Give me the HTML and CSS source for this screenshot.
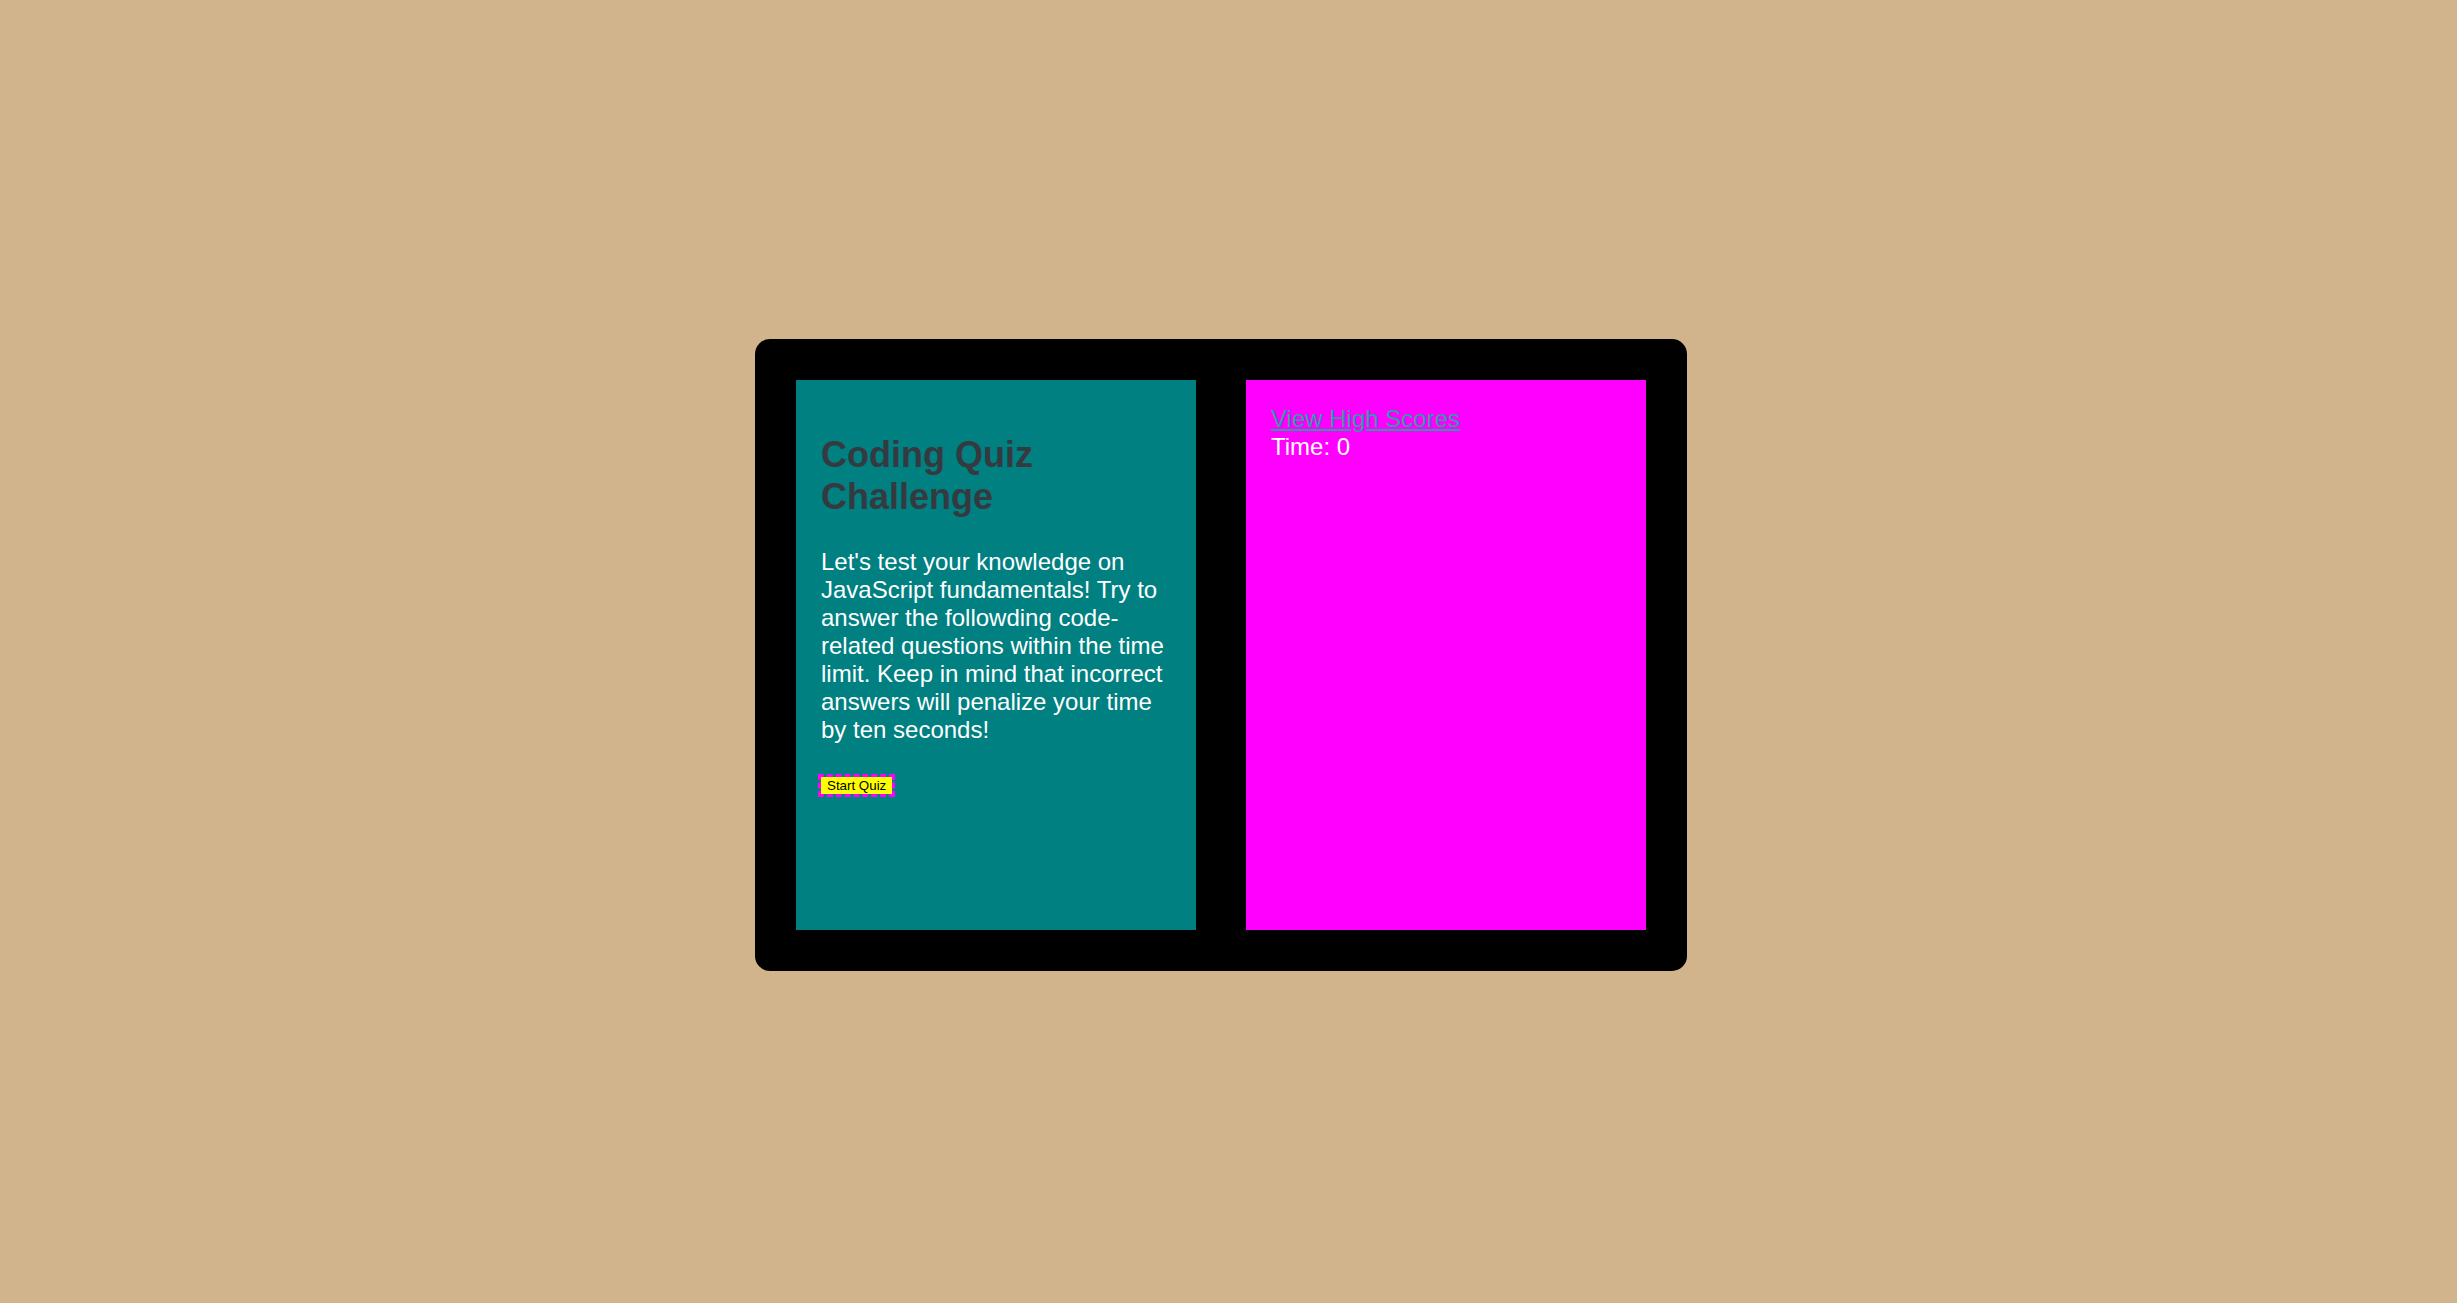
FILE: index.html
```html
<!DOCTYPE html>
<html lang="en">
<head>
<meta charset="utf-8">
<title>Coding Quiz Challenge</title>
<link rel="stylesheet" href="styles.css">
</head>
<body>
<div class="page">
  <main class="frame">
    <section class="panel intro">
      <h1 class="title">Coding Quiz Challenge</h1>
      <p class="lead">Let's test your knowledge on JavaScript fundamentals! Try to answer the followding code-related questions within the time limit. Keep in mind that incorrect answers will penalize your time by ten seconds!</p>
      <button class="start" type="button">Start Quiz</button>
    </section>
    <section class="panel side">
      <a class="scores" href="#">View High Scores</a>
      <div class="timer">Time: 0</div>
    </section>
  </main>
</div>
</body>
</html>
```
FILE: styles.css
```css
html, body {
  margin: 0;
  padding: 0;
}
body {
  background: #d2b48c;
  font-family: "Liberation Sans", Arial, sans-serif;
}
.page {
  min-height: 1303px;
  box-sizing: border-box;
  padding: 7px 15px 0 0;
  display: flex;
  align-items: center;
  justify-content: center;
}
.frame {
  display: flex;
  gap: 50px;
  padding: 41px;
  background: #000;
  border-radius: 15px;
}
.panel {
  width: 400px;
  height: 550px;
  box-sizing: border-box;
  padding: 25px;
}
.intro {
  background: #008080;
  color: #fff;
}
.side {
  background: #ff00ff;
  color: #fff;
  font-size: 24px;
}
.title {
  margin: 29px 0 0;
  font-size: 36px;
  font-weight: bold;
  color: #343a40;
}
.lead {
  margin: 30px 0 0;
  font-size: 24px;
}
.start {
  display: block;
  margin: 33px 0 0;
  padding: 1px 6px;
  border: none;
  background: #ffff00;
  color: #000;
  font-family: "Liberation Sans", Arial, sans-serif;
  font-size: 13.333px;
  outline: 3px dashed #ff00ff;
}
.scores {
  color: #2b9ba8;
  text-decoration: underline;
}
.timer {
  color: #fff;
}
```
